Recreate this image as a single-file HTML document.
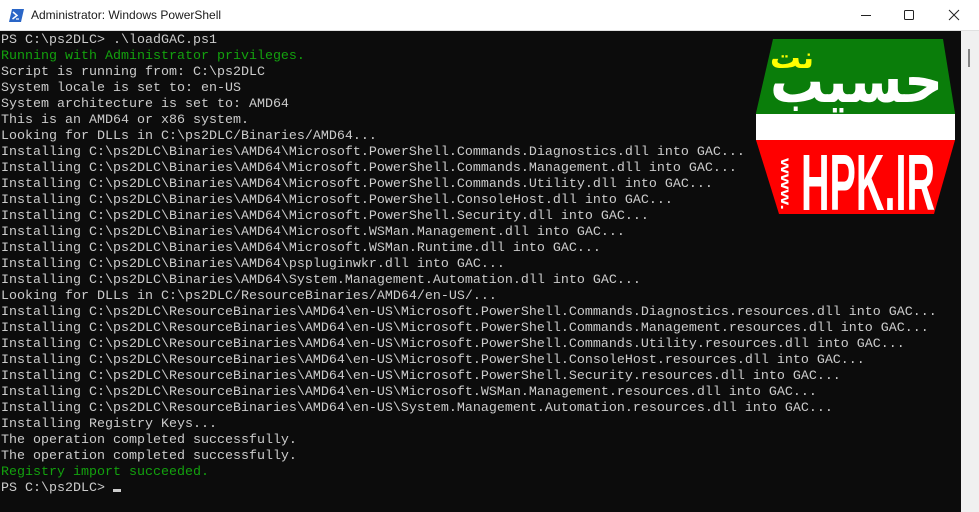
<!DOCTYPE html>
<html><head><meta charset="utf-8"><style>
html,body{margin:0;padding:0;width:979px;height:512px;overflow:hidden;background:#0c0c0c}
#title{position:absolute;left:0;top:0;width:979px;height:31px;background:#fff;border-bottom:1px solid #e0e0e0;box-sizing:border-box}
#title .t{position:absolute;left:31px;top:8px;font:12px "Liberation Sans",sans-serif;color:#1a1a1a}
#term{position:absolute;left:0;top:31px;width:961px;height:481px;background:#0c0c0c}
pre{margin:0;position:absolute;left:1px;top:2px;font:13.33px/16px "Liberation Mono",monospace;color:#cccccc}
.g{color:#13a10e}
#sb{position:absolute;left:961px;top:31px;width:18px;height:481px;background:#f0f0f0}
#thumb{position:absolute;left:968px;top:49px;width:2px;height:18px;background:#858585}
.cur{display:inline-block;width:8px;height:3px;background:#ccc;vertical-align:-1px}
</style></head><body>
<div id="title">
<svg style="position:absolute;left:9px;top:9px" width="15" height="13" viewBox="0 0 15 13"><polygon points="3,0 15,0 12,13 0,13" fill="#2a66c7"/><path d="M4,3 L8,6.5 L3.5,10" stroke="#fff" stroke-width="1.5" fill="none"/><path d="M7,10 H10" stroke="#fff" stroke-width="1.2"/></svg>
<span class="t">Administrator: Windows PowerShell</span>
<svg style="position:absolute;left:860px;top:10px" width="12" height="12"><path d="M1,5.5 H11" stroke="#222" stroke-width="1"/></svg>
<svg style="position:absolute;left:903px;top:9px" width="12" height="12"><rect x="1.5" y="1.5" width="9" height="9" rx="1" fill="none" stroke="#222" stroke-width="1"/></svg>
<svg style="position:absolute;left:948px;top:9px" width="12" height="12"><path d="M1,1 L11,11 M11,1 L1,11" stroke="#222" stroke-width="1"/></svg>
</div>
<div id="term"><pre>PS C:\ps2DLC&gt; .\loadGAC.ps1
<span class="g">Running with Administrator privileges.</span>
Script is running from: C:\ps2DLC
System locale is set to: en-US
System architecture is set to: AMD64
This is an AMD64 or x86 system.
Looking for DLLs in C:\ps2DLC/Binaries/AMD64...
Installing C:\ps2DLC\Binaries\AMD64\Microsoft.PowerShell.Commands.Diagnostics.dll into GAC...
Installing C:\ps2DLC\Binaries\AMD64\Microsoft.PowerShell.Commands.Management.dll into GAC...
Installing C:\ps2DLC\Binaries\AMD64\Microsoft.PowerShell.Commands.Utility.dll into GAC...
Installing C:\ps2DLC\Binaries\AMD64\Microsoft.PowerShell.ConsoleHost.dll into GAC...
Installing C:\ps2DLC\Binaries\AMD64\Microsoft.PowerShell.Security.dll into GAC...
Installing C:\ps2DLC\Binaries\AMD64\Microsoft.WSMan.Management.dll into GAC...
Installing C:\ps2DLC\Binaries\AMD64\Microsoft.WSMan.Runtime.dll into GAC...
Installing C:\ps2DLC\Binaries\AMD64\pspluginwkr.dll into GAC...
Installing C:\ps2DLC\Binaries\AMD64\System.Management.Automation.dll into GAC...
Looking for DLLs in C:\ps2DLC/ResourceBinaries/AMD64/en-US/...
Installing C:\ps2DLC\ResourceBinaries\AMD64\en-US\Microsoft.PowerShell.Commands.Diagnostics.resources.dll into GAC...
Installing C:\ps2DLC\ResourceBinaries\AMD64\en-US\Microsoft.PowerShell.Commands.Management.resources.dll into GAC...
Installing C:\ps2DLC\ResourceBinaries\AMD64\en-US\Microsoft.PowerShell.Commands.Utility.resources.dll into GAC...
Installing C:\ps2DLC\ResourceBinaries\AMD64\en-US\Microsoft.PowerShell.ConsoleHost.resources.dll into GAC...
Installing C:\ps2DLC\ResourceBinaries\AMD64\en-US\Microsoft.PowerShell.Security.resources.dll into GAC...
Installing C:\ps2DLC\ResourceBinaries\AMD64\en-US\Microsoft.WSMan.Management.resources.dll into GAC...
Installing C:\ps2DLC\ResourceBinaries\AMD64\en-US\System.Management.Automation.resources.dll into GAC...
Installing Registry Keys...
The operation completed successfully.
The operation completed successfully.
<span class="g">Registry import succeeded.</span>
PS C:\ps2DLC&gt; <span class="cur"></span></pre></div>
<svg style="position:absolute;left:755px;top:38px" width="202" height="178" viewBox="0 0 202 178">
<defs><clipPath id="hx"><polygon points="18,1 188,1 200,75 200,102 179,176 24,176 1,102 1,75"/></clipPath></defs>
<g clip-path="url(#hx)">
<rect x="0" y="0" width="202" height="76" fill="#0a7d0a"/>
<rect x="0" y="76" width="202" height="26" fill="#fff"/>
<rect x="0" y="102" width="202" height="76" fill="#f00"/>
</g>
<text x="15" y="64" font-family="'DejaVu Sans',sans-serif" font-size="62" font-weight="bold" fill="#fff" textLength="173" lengthAdjust="spacingAndGlyphs">حسيب</text>
<text x="15" y="30" font-family="'DejaVu Sans',sans-serif" font-size="30" font-weight="bold" fill="#ffff00" textLength="44" lengthAdjust="spacingAndGlyphs">نت</text>
<text x="26" y="120" font-family="'Liberation Sans',sans-serif" font-size="14" font-weight="bold" fill="#fff" transform="rotate(90 26 120)" textLength="52" lengthAdjust="spacingAndGlyphs">www.</text>
<text x="46" y="172" font-family="'Liberation Sans',sans-serif" font-size="80" font-weight="bold" fill="#fff" textLength="134" lengthAdjust="spacingAndGlyphs">HPK.IR</text>
</svg>
<div id="sb"></div><div id="thumb"></div>
</body></html>
